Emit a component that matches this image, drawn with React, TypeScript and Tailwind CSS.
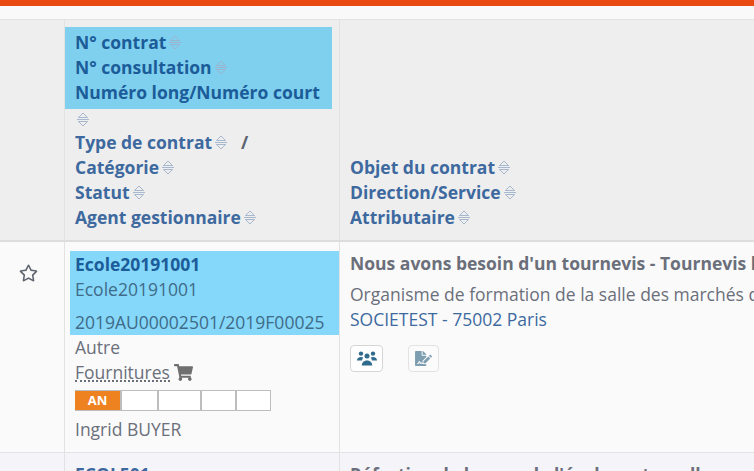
import { FaFileSignature, FaRegStar, FaShoppingCart } from "react-icons/fa";

function SortIcon({ className = "" }: { className?: string }) {
  return (
    <svg viewBox="0 0 12 15" className={`ml-[3px] inline-block h-[15px] w-3 align-[-1px] ${className}`} fill="none" stroke="#9db0c9" strokeWidth="0.9">
      <path d="M1.5 5.5 6 1l4.5 4.5z" />
      <path d="M0 7.5h12" />
      <path d="M1.5 9.5h9L6 14z" />
    </svg>
  );
}

function UsersIcon() {
  return (
    <svg viewBox="0 0 20 15" className="h-[15px] w-5" fill="#2f6b8c">
      <circle cx="4" cy="2.6" r="2.2" />
      <circle cx="16" cy="2.6" r="2.2" />
      <circle cx="10" cy="5" r="2.5" />
      <path d="M0 9.6C0 7.2 1.6 6 4 6c.9 0 1.7.2 2.3.5-.8.8-1.2 1.9-1.2 3.1H0z" />
      <path d="M20 9.6C20 7.2 18.4 6 16 6c-.9 0-1.7.2-2.3.5.8.8 1.2 1.9 1.2 3.1H20z" />
      <path d="M4.8 14.6c0-3 1.9-5.2 5.2-5.2s5.2 2.2 5.2 5.2z" />
    </svg>
  );
}

function SortLabel({ label, active, noIcon }: { label: string; active?: boolean; noIcon?: boolean }) {
  return (
    <div className={active ? "text-[#1b5c99]" : "text-[#3d699f]"}>
      {label}
      {noIcon ? null : <SortIcon />}
    </div>
  );
}

const stepWidths = ["w-[37px]", "w-[43px]", "w-[35px]", "w-[35px]"];

export default function App() {
  return (
    <div className="h-[471px] w-[754px] overflow-hidden bg-white font-['Open_Sans',sans-serif] text-[17.5px] leading-[25px] text-[#6b6f7a]">
      <div className="h-[6px] bg-[#e84a11]" />
      <div className="h-[13px] bg-[#f9f9f9]" />

      <div className="grid grid-cols-[65px_275px_414px] border-t border-b-2 border-t-[#e2e2e2] border-b-[#dddddd] bg-[#eeeeee] font-bold">
        <div className="border-r border-[#e2e2e2]" />
        <div className="h-[220px] whitespace-nowrap border-r border-[#e2e2e2] pt-[7px]">
          <div className="mr-[7px] h-[82px] bg-[#7fd0ee] pl-[10px] pt-[3px]">
            <SortLabel label="N° contrat" active />
            <SortLabel label="N° consultation" active />
            <SortLabel label="Numéro long/Numéro court" active noIcon />
          </div>
          <div className="pl-[10px]">
            <div className="h-[21px] leading-[21px]">
              <SortIcon className="!ml-[2px]" />
            </div>
            <div className="text-[#3d699f]">
              Type de contrat
              <SortIcon />
              <span className="ml-[14px] text-[#5b6270]">/</span>
            </div>
            <SortLabel label="Catégorie" />
            <SortLabel label="Statut" />
            <SortLabel label="Agent gestionnaire" />
          </div>
        </div>
        <div className="flex flex-col justify-end whitespace-nowrap pb-[10px] pl-[10px]">
          <SortLabel label="Objet du contrat" />
          <SortLabel label="Direction/Service" />
          <SortLabel label="Attributaire" />
        </div>
      </div>

      <div className="grid h-[211px] grid-cols-[65px_275px_414px] border-b border-[#e2e2e8] bg-[#fafafa]">
        <div className="flex justify-center border-r border-[#e2e2e2] pr-2 pt-[22px]">
          <FaRegStar className="h-[18px] w-[19px] text-[#5f6670]" />
        </div>
        <div className="whitespace-nowrap border-r border-[#e2e2e2] pt-[9px]">
          <div className="ml-[5px] h-[84px] bg-[#85d8fa] pl-[5px] pt-[1px] text-[#3f6b88]">
            <div className="font-bold text-[#1b5c99]">Ecole20191001</div>
            <div>Ecole20191001</div>
            <div className="mt-2">2019AU00002501/2019F00025</div>
          </div>
          <div className="pl-[10px]">
            <div>Autre</div>
            <div className="flex h-[25px] items-start">
              <span className="h-[22px] border-b-2 border-dotted border-[#6b6f7a]">Fournitures</span>
              <FaShoppingCart className="ml-[4px] mt-[4px] h-[17px] w-[19px] text-[#6f6f6f]" />
            </div>
            <div className="mt-[5px] flex h-[21px] w-[196px] border border-[#bdbdbd] bg-white">
              <div className="-ml-px flex w-[45px] items-center justify-center bg-[#ee8220] text-[13px] font-bold text-white">AN</div>
              {stepWidths.map((width, i) => (
                <div key={i} className={`${width} border-l-2 border-[#bdbdbd]`} />
              ))}
            </div>
            <div className="mt-[6px]">Ingrid BUYER</div>
          </div>
        </div>
        <div className="whitespace-nowrap pl-[10px] pt-[9px]">
          <div className="font-bold">Nous avons besoin d'un tournevis - Tournevis long</div>
          <div className="mt-[6px]">Organisme de formation de la salle des marchés de</div>
          <div className="text-[#3d699f]">SOCIETEST - 75002 Paris</div>
          <div className="mt-[13px] flex">
            <div className="flex h-[27px] w-[33px] items-center justify-center rounded border border-[#d5d5d5] bg-white">
              <UsersIcon />
            </div>
            <div className="ml-[25px] flex h-[27px] w-[31px] items-center justify-center rounded border border-[#e2e2e2] bg-[#fbfbfb]">
              <FaFileSignature className="h-[15px] w-[17px] text-[#7d9db0]" />
            </div>
          </div>
        </div>
      </div>

      <div className="grid h-[20px] grid-cols-[65px_275px_414px] bg-[#f4f4f9] font-bold">
        <div className="border-r border-[#e2e2e2]" />
        <div className="border-r border-[#e2e2e2] pl-[10px] pt-[9px] text-[#3d699f]">ECOL501</div>
        <div className="whitespace-nowrap pl-[10px] pt-[9px]">Réfection de la cour de l'école maternelle</div>
      </div>
    </div>
  );
}
